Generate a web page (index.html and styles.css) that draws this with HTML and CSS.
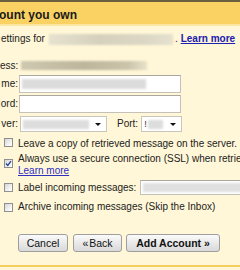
FILE: index.html
```html
<!DOCTYPE html>
<html lang="en">
<head>
<meta charset="utf-8">
<title>Add a mail account you own</title>
<link rel="stylesheet" href="styles.css">
</head>
<body>
<div class="dialog">
  <div class="topline"></div>
  <div class="header"><span class="title">ount you own</span></div>
  <div class="intro">
    <span>ettings for</span><span class="blur blur-email"></span><span>.</span><a class="learn-bold" href="#">Learn more</a>
  </div>
  <div class="form">
    <div class="frow frow-email">
      <span class="lbl">ess:</span><span class="blur blur-addr"></span>
    </div>
    <div class="frow">
      <span class="lbl">me:</span>
      <div class="input"><span class="blur blur-user"></span></div>
    </div>
    <div class="frow">
      <span class="lbl">ord:</span>
      <div class="input"></div>
    </div>
    <div class="frow">
      <span class="lbl">ver:</span>
      <div class="select sel-server"><span class="blur blur-server"></span><span class="arrow"></span></div>
      <span class="port-lbl">Port:</span>
      <div class="select sel-port"><span class="bang">!</span><span class="blur blur-port"></span><span class="arrow"></span></div>
    </div>
  </div>
  <div class="checks">
    <div class="crow crow-a">
      <input type="checkbox" class="cb">
      <span class="ctext">Leave a copy of retrieved message on the server.</span><span class="blur blur-help"></span>
    </div>
    <div class="crow crow-b">
      <input type="checkbox" class="cb" checked>
      <span class="ctext">Always use a secure connection (SSL) when retrieving mail.<br><a class="learn" href="#">Learn more</a></span>
    </div>
    <div class="crow crow-c">
      <input type="checkbox" class="cb">
      <span class="ctext">Label incoming messages:</span>
      <div class="input input-label"><span class="blur blur-label"></span></div>
    </div>
    <div class="crow crow-d">
      <input type="checkbox" class="cb">
      <span class="ctext">Archive incoming messages (Skip the Inbox)</span>
    </div>
  </div>
  <div class="buttons">
    <button class="btn btn-cancel">Cancel</button>
    <button class="btn btn-back"><span class="laquo">«</span>Back</button>
    <button class="btn btn-add">Add Account <span class="raquo">»</span></button>
  </div>
  <div class="bottomline"></div>
</div>
</body>
</html>
```

FILE: styles.css
```css
html, body {
  margin: 0;
  padding: 0;
}

body {
  width: 240px;
  height: 270px;
  overflow: hidden;
  background: #fff7d7;
  font-family: "Liberation Sans", Arial, sans-serif;
  font-size: 10px;
  color: #222;
}

.dialog {
  display: flex;
  flex-direction: column;
  height: 270px;
  white-space: nowrap;
}

.topline {
  height: 2px;
  background: #6b5f3f;
}

.header {
  height: 16px;
  padding-top: 6px;
  background: #fad163;
  border-bottom: 2px solid #fde6a0;
  font-size: 12px;
  font-weight: bold;
  line-height: 15px;
  color: #1a1a1a;
}

.title {
  margin-left: -1px;
}

.intro {
  display: flex;
  align-items: center;
  margin-top: 7px;
  height: 12px;
  line-height: 12px;
  padding-left: 1px;
}

.blur {
  display: inline-block;
  background: #d8d4c2;
  filter: blur(1.2px);
}

.blur-email {
  width: 124px;
  height: 11px;
  margin-left: 4px;
  margin-right: 2px;
  background: linear-gradient(90deg, #e6e2cf, #d5d1bd 40%, #dcd8c5 80%, #e6e2cf);
}

.learn-bold {
  margin-left: 3px;
  color: #2020b0;
  font-weight: bold;
  text-decoration: underline;
}

.form {
  display: flex;
  flex-direction: column;
  gap: 2px;
  margin-top: 13px;
}

.frow {
  display: flex;
  align-items: center;
  height: 18px;
  line-height: 12px;
}

.frow-email {
  height: 15px;
  margin-top: 0;
}

.lbl {
  width: 18px;
  margin-right: 1px;
  text-align: right;
  overflow: hidden;
}

.blur-addr {
  width: 126px;
  height: 9px;
  margin-left: 2px;
  background: linear-gradient(90deg, #cfc8b0, #bdb59c 50%, #cbc3aa 85%, #e9e3cc);
}

.input {
  display: flex;
  align-items: center;
  box-sizing: border-box;
  width: 162px;
  height: 18px;
  background: #fff;
  border: 1px solid #c4c2b8;
  border-top-color: #a9a79e;
}

.blur-user {
  width: 124px;
  height: 10px;
  margin-left: 2px;
  background: #dcdcdc;
}

.select {
  position: relative;
  display: flex;
  align-items: center;
  box-sizing: border-box;
  height: 16px;
  background: #fff;
  border: 1px solid #c8c6bc;
}

.sel-server {
  width: 87px;
  margin-left: 1px;
}

.blur-server {
  width: 66px;
  height: 9px;
  margin-left: 2px;
  background: #dddddd;
}

.arrow {
  position: absolute;
  right: 5px;
  top: 6px;
  width: 0;
  height: 0;
  border-left: 3px solid transparent;
  border-right: 3px solid transparent;
  border-top: 3px solid #111;
}

.port-lbl {
  margin-left: 10px;
  margin-right: 3px;
}

.sel-port {
  width: 41px;
}

.bang {
  margin-left: 2px;
  color: #333;
  font-size: 9px;
}

.blur-port {
  width: 15px;
  height: 9px;
  margin-left: 1px;
  background: #dddddd;
}

.checks {
  display: flex;
  flex-direction: column;
  margin-top: 5px;
}

.crow {
  display: flex;
  align-items: flex-start;
  line-height: 12px;
  color: #222;
}

.cb {
  appearance: none;
  -webkit-appearance: none;
  box-sizing: border-box;
  width: 9px;
  height: 9px;
  margin: 0 5px 0 4px;
  flex: none;
  border: 1px solid #8e8f8f;
  background: linear-gradient(135deg, #d6d6d6, #f6f6f6 70%, #ffffff);
}

.cb:checked {
  background:
    url("data:image/svg+xml,%3Csvg xmlns='http://www.w3.org/2000/svg' width='7' height='7' viewBox='0 0 7 7'%3E%3Cpath d='M1 3.5 L2.8 5.4 L6 1.2' fill='none' stroke='%23294a9a' stroke-width='1.4'/%3E%3C/svg%3E") center / 7px 7px no-repeat,
    linear-gradient(135deg, #d6d6d6, #f6f6f6 70%, #ffffff);
}

.crow-a {
  margin-top: 0;
}

.crow-a .cb {
  margin-top: 0;
}

.blur-help {
  width: 5px;
  height: 10px;
  margin-left: 3px;
  margin-top: 1px;
  background: #e4e0d0;
}

.crow-b {
  margin-top: 3px;
}

.crow-b .cb {
  margin-top: 6px;
}

.learn {
  color: #3030c0;
  text-decoration: underline;
}

.crow-c {
  align-items: center;
  height: 15px;
  margin-top: 3px;
}

.input-label {
  width: 120px;
  height: 15px;
  margin-left: 4px;
}

.blur-label {
  width: 110px;
  height: 9px;
  margin-left: 2px;
  background: #e0e0e0;
}

.crow-d {
  margin-top: 6px;
}

.crow-d .cb {
  margin-top: 2px;
}

.buttons {
  display: flex;
  margin-top: 21px;
  padding-left: 18px;
}

.btn {
  box-sizing: border-box;
  height: 18px;
  padding: 0;
  border: 1px solid #9e9e9e;
  border-radius: 3px;
  background: linear-gradient(#fbfbfb, #e9e9e9 50%, #d9d9d9);
  font-family: "Liberation Sans", Arial, sans-serif;
  font-size: 10.5px;
  color: #111;
  line-height: 14px;
}

.btn-cancel {
  width: 50px;
}

.btn-back {
  width: 49px;
  margin-left: 5px;
}

.laquo {
  margin-right: 1px;
}

.btn-add {
  width: 94px;
  margin-left: 4px;
  font-weight: bold;
}

.bottomline {
  margin-top: auto;
  margin-bottom: 3px;
  height: 2px;
  background: #f5cf5e;
}
```
